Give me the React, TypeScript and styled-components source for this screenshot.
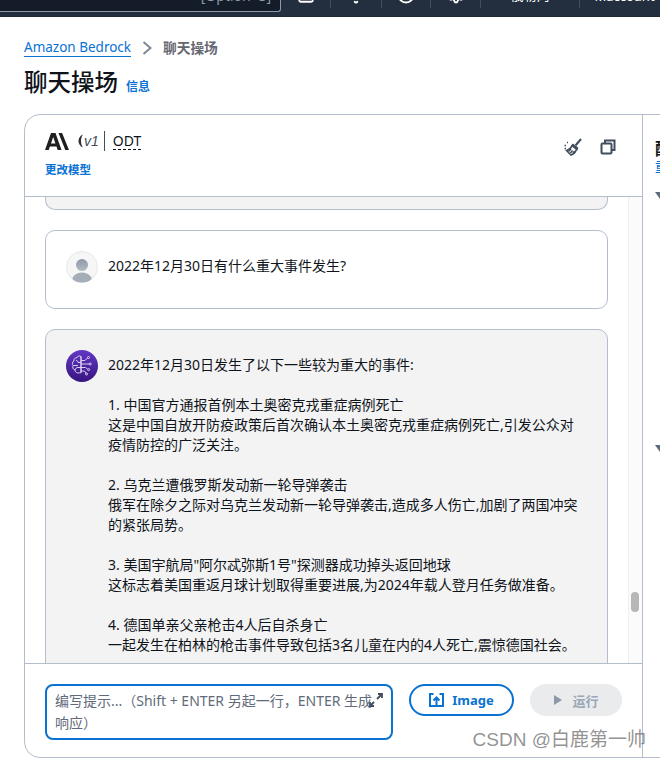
import styled, { createGlobalStyle } from "styled-components";
import { Bell, CircleHelp, Settings, SquareTerminal } from "lucide-react";

const GlobalStyle = createGlobalStyle`
  html, body {
    margin: 0;
    padding: 0;
    background: #fff;
  }
  body {
    width: 660px;
    height: 758px;
    overflow: hidden;
    font-family: "Noto Sans", "Noto Sans CJK SC", sans-serif;
    color: #0f141a;
  }
  * { box-sizing: border-box; }
`;

const Page = styled.div`
  width: 660px;
  height: 758px;
  display: flex;
  flex-direction: column;
  overflow: hidden;
  position: relative;
`;

const TopBar = styled.header`
  height: 17px;
  flex: none;
  background: #232f3e;
  border-bottom: 1px solid #1d2835;
  display: flex;
  align-items: flex-start;
  overflow: hidden;
`;

const SearchBox = styled.div`
  width: 281px;
  height: 12px;
  flex: none;
  background: #141c2a;
  border: 1px solid #8d99a8;
  border-width: 0 1px 1px 0;
  border-radius: 0 0 3px 0;
  display: flex;
  justify-content: flex-end;
  padding-right: 9px;
  overflow: hidden;
`;

const SearchHint = styled.span`
  margin-top: -13px;
  font-size: 14px;
  line-height: 18px;
  color: #8d99a8;
`;

const NavCell = styled.div<{ $width: number }>`
  width: ${(p) => p.$width}px;
  height: 8px;
  flex: none;
  display: flex;
  justify-content: center;
  border-right: 1px solid #414d5c;
  overflow: hidden;
  color: #fff;
  font-size: 13px;
  line-height: 16px;
`;

const NavIconSlot = styled.div`
  margin-top: -14px;
  height: 18px;
`;

const NavText = styled.span`
  margin-top: -13px;
`;

const AccountText = styled(NavText)`
  margin-top: -12px;
`;

const Content = styled.main`
  flex: 1;
  min-height: 0;
  padding: 21px 0 0 24px;
  display: flex;
  flex-direction: column;
`;

const Crumbs = styled.nav`
  display: flex;
  align-items: center;
  height: 19px;
`;

const CrumbLink = styled.a`
  color: #0972d3;
  font-size: 13.5px;
  border-bottom: 1px solid #0972d3;
  line-height: 18px;
`;

const CrumbCurrent = styled.span`
  color: #656871;
  font-size: 13.7px;
  font-weight: 700;
  margin-bottom: 2px;
`;

const CrumbArrow = styled.svg`
  width: 10px;
  height: 14px;
  margin: 0 11px 0 11px;
  fill: none;
  stroke: #7d8998;
  stroke-width: 2;
`;

const TitleRow = styled.div`
  display: flex;
  align-items: baseline;
  gap: 8px;
  margin-top: 8px;
  height: 34px;
`;

const Title = styled.h1`
  margin: 0;
  font-size: 23.5px;
  line-height: 34px;
  font-weight: 500;
  color: #0f141a;
`;

const Info = styled.a`
  font-size: 12px;
  font-weight: 700;
  color: #0972d3;
`;

const Playground = styled.section`
  margin-top: 15px;
  width: 700px;
  height: 645px;
  border: 1px solid #b4bdcc;
  border-radius: 16px;
  display: flex;
  overflow: hidden;
`;

const ChatColumn = styled.div`
  width: 618px;
  flex: none;
  display: flex;
  flex-direction: column;
  border-right: 1px solid #b4bdcc;
`;

const ModelBar = styled.div`
  height: 82px;
  flex: none;
  padding: 15px 25px 0 20px;
  display: flex;
  justify-content: space-between;
  align-items: flex-start;
  border-bottom: 1px solid #b4bdcc;
`;

const ModelInfo = styled.div`
  display: flex;
  flex-direction: column;
  gap: 10px;
`;

const ModelName = styled.div`
  display: flex;
  align-items: center;
  height: 22px;
`;

const Crescent = styled.svg`
  margin-left: 9px;
  flex: none;
`;

const Version = styled.span`
  font-family: "Liberation Sans", sans-serif;
  font-size: 14px;
  font-style: italic;
  color: #414d5c;
  margin-left: -2px;
`;

const Divider = styled.span`
  width: 1px;
  height: 20px;
  background: #414d5c;
  margin: 0 8px 0 5px;
`;

const Odt = styled.span`
  font-size: 14px;
  line-height: 17px;
  border-bottom: 1px dashed #0f141a;
  color: #0f141a;
`;

const ChangeModel = styled.a`
  font-size: 11.500px;
  line-height: 16px;
  font-weight: 700;
  color: #0972d3;
`;

const Tools = styled.div`
  display: flex;
  gap: 17px;
  margin-top: 8px;
`;

const ToolIcon = styled.svg`
  width: 18px;
  height: 18px;
  fill: none;
  stroke: #414d5c;
  stroke-width: 1.5;
`;

const CopyIcon = styled(ToolIcon)`
  stroke-width: 2;
`;

const ChatArea = styled.div`
  height: 467px;
  flex: none;
  display: flex;
  border-bottom: 1px solid #b4bdcc;
  overflow: hidden;
`;

const Messages = styled.div`
  width: 603px;
  flex: none;
  padding: 0 20px;
  display: flex;
  flex-direction: column;
  gap: 20px;
  overflow: hidden;
`;

const Bubble = styled.div<{ $model?: boolean }>`
  flex: none;
  width: 563px;
  border: 1px solid #b4bdcc;
  border-radius: 10px;
  background: ${(p) => (p.$model ? "#f3f3f4" : "#fff")};
  padding: 20px 20px 0;
  display: flex;
  gap: 10px;
  font-size: 14px;
  line-height: 20px;
  color: #0f141a;
`;

const EndOfPrevious = styled(Bubble)`
  height: 13px;
  padding: 0;
  border-top: 0;
  border-radius: 0 0 10px 10px;
  background: #f3f3f4;
`;

const QuestionBubble = styled(Bubble)`
  height: 79px;
`;

const AnswerBubble = styled(Bubble)`
  height: 400px;
`;

const Avatar = styled.svg`
  width: 32px;
  height: 32px;
  flex: none;
`;

const MessageText = styled.div`
  width: 475px;
  white-space: pre-wrap;
  padding-top: 5px;
`;

const ScrollTrack = styled.div`
  width: 14px;
  flex: none;
  background: #fbfbfb;
  border-left: 1px solid #eef0f2;
  position: relative;
`;

const ScrollThumb = styled.div`
  position: absolute;
  top: 395px;
  left: 2px;
  width: 8px;
  height: 20px;
  border-radius: 4px;
  background: #b7b7b7;
`;

const Composer = styled.div`
  flex: 1;
  padding: 20px 20px 0;
  display: flex;
  gap: 16px;
  align-items: flex-start;
`;

const PromptBox = styled.div`
  width: 348px;
  height: 56px;
  flex: none;
  border: 2px solid #0972d3;
  border-radius: 8px;
  padding: 4px 12px 4px 8px;
  font-size: 14px;
  line-height: 22px;
  color: #5f6b7a;
  position: relative;
`;

const ResizeIcon = styled.svg`
  position: absolute;
  top: 6px;
  right: 7px;
  width: 17px;
  height: 17px;
  fill: none;
  stroke: #414d5c;
  stroke-width: 1.8;
`;

const PillButton = styled.button<{ $disabled?: boolean }>`
  height: 32px;
  border-radius: 16px;
  display: flex;
  align-items: center;
  justify-content: center;
  font-family: inherit;
  font-size: 13px;
  font-weight: 700;
  padding: 0;
  border: ${(p) => (p.$disabled ? "0" : "2px solid #0972d3")};
  background: ${(p) => (p.$disabled ? "#e9ebed" : "#fff")};
  color: ${(p) => (p.$disabled ? "#9ba7b6" : "#0972d3")};
`;

const ImageButton = styled(PillButton)`
  width: 105px;
  gap: 8px;
`;

const RunButton = styled(PillButton)`
  width: 92px;
  gap: 9px;
`;

const SidePanel = styled.aside`
  padding: 25px 0 0 12px;
  display: flex;
  flex-direction: column;
`;

const SideTitle = styled.div`
  font-size: 17px;
  line-height: 18px;
  font-weight: 700;
`;

const SideLink = styled.div`
  font-size: 12px;
  line-height: 16px;
  margin-top: 2px;
  font-weight: 500;
  color: #0972d3;
`;

const Caret = styled.span<{ $gap: number }>`
  margin-top: ${(p) => p.$gap}px;
  width: 0;
  height: 0;
  flex: none;
  border-left: 5px solid transparent;
  border-right: 5px solid transparent;
  border-top: 7px solid #5f6b7a;
`;

const Watermark = styled.div`
  position: absolute;
  right: 14px;
  bottom: 7px;
  font-family: "Liberation Sans", "Noto Sans CJK SC", sans-serif;
  font-size: 19px;
  line-height: 22px;
  color: rgba(105, 105, 105, 0.72);
`;

const answer = `2022年12月30日发生了以下一些较为重大的事件:

1. 中国官方通报首例本土奥密克戎重症病例死亡
这是中国自放开防疫政策后首次确认本土奥密克戎重症病例死亡,引发公众对疫情防控的广泛关注。

2. 乌克兰遭俄罗斯发动新一轮导弹袭击
俄军在除夕之际对乌克兰发动新一轮导弹袭击,造成多人伤亡,加剧了两国冲突的紧张局势。

3. 美国宇航局"阿尔忒弥斯1号"探测器成功掉头返回地球
这标志着美国重返月球计划取得重要进展,为2024年载人登月任务做准备。

4. 德国单亲父亲枪击4人后自杀身亡
一起发生在柏林的枪击事件导致包括3名儿童在内的4人死亡,震惊德国社会。`;

export default function App() {
  return (
    <Page>
      <GlobalStyle />
      <TopBar>
        <SearchBox>
          <SearchHint>[Option+S]</SearchHint>
        </SearchBox>
        <NavCell $width={50}>
          <NavIconSlot>
            <SquareTerminal size={18} strokeWidth={2.5} />
          </NavIconSlot>
        </NavCell>
        <NavCell $width={51}>
          <NavIconSlot>
            <Bell size={18} strokeWidth={2.5} />
          </NavIconSlot>
        </NavCell>
        <NavCell $width={49}>
          <NavIconSlot>
            <CircleHelp size={18} strokeWidth={2.5} />
          </NavIconSlot>
        </NavCell>
        <NavCell $width={50}>
          <NavIconSlot>
            <Settings size={18} strokeWidth={2.5} />
          </NavIconSlot>
        </NavCell>
        <NavCell $width={99}>
          <NavText>俄勒冈</NavText>
        </NavCell>
        <NavCell $width={90}>
          <AccountText>Maccount</AccountText>
        </NavCell>
      </TopBar>
      <Content>
        <Crumbs>
          <CrumbLink>Amazon Bedrock</CrumbLink>
          <CrumbArrow viewBox="0 0 10 14">
            <path d="M1.500 1l7 6-7 6" />
          </CrumbArrow>
          <CrumbCurrent>聊天操场</CrumbCurrent>
        </Crumbs>
        <TitleRow>
          <Title>聊天操场</Title>
          <Info>信息</Info>
        </TitleRow>
        <Playground>
          <ChatColumn>
            <ModelBar>
              <ModelInfo>
                <ModelName>
                  <svg width="24" height="17" viewBox="0 0 24 17">
                    <path
                      fill="#1f1f1f"
                      d="M0 17L6 0h4.500L16.500 17h-3.800l-1.200-3.500H4.900L3.700 17H0zm6-6.500h4.400L8.200 4 6 10.500zM13.500 0h3.600L24 17h-3.700L13.500 0z"
                    />
                  </svg>
                  <Crescent width="8" height="14" viewBox="0 0 8 14">
                    <path fill="#2b2f36" d="M5 0.500C2 1.500.500 4.500.500 7s1.500 5.500 4.500 6.500C3.500 11.500 3 9 3 7s.5-4.500 2-6.500z" />
                  </Crescent>
                  <Version>v1</Version>
                  <Divider />
                  <Odt>ODT</Odt>
                </ModelName>
                <ChangeModel>更改模型</ChangeModel>
              </ModelInfo>
              <Tools>
                <ToolIcon viewBox="0 0 18 18">
                  <path d="M17 1l-5.500 6.500" strokeWidth="2" />
                  <path fill="#414d5c" d="M9 6.500l4.500 3.500-.5 1.500L8 7.500z" />
                  <path d="M8.500 7.500c-1.500 2.500-3.500 4.500-6 5L7 17c2.500-1 5-3.500 5.500-6z" />
                  <path d="M6.500 15l2-2.500M4.500 13.500L7 11M9 15.500l1.500-2.500" />
                  <path d="M.5 7.500h1.500M3 4.500h1M.5 10.500h1.500" />
                </ToolIcon>
                <CopyIcon viewBox="0 0 18 18">
                  <path d="M6 5V2.500h9.500V12H13" />
                  <rect x="2.500" y="5.500" width="10" height="10" rx="1" />
                </CopyIcon>
              </Tools>
            </ModelBar>
            <ChatArea>
              <Messages>
                <EndOfPrevious />
                <QuestionBubble>
                  <Avatar viewBox="0 0 32 32">
                    <defs>
                      <clipPath id="userClip">
                        <circle cx="16" cy="16" r="15.500" />
                      </clipPath>
                      <linearGradient id="userFill" x1="0" y1="0" x2="0" y2="1">
                        <stop offset="0" stopColor="#8f98a5" />
                        <stop offset="1" stopColor="#b4bbc4" />
                      </linearGradient>
                    </defs>
                    <circle cx="16" cy="16" r="15.500" fill="#f6f6f6" stroke="#e6e8ea" />
                    <g clipPath="url(#userClip)">
                      <circle cx="16" cy="14" r="6" fill="url(#userFill)" />
                      <ellipse cx="16" cy="28" rx="9.500" ry="6.500" fill="#a5adb7" />
                    </g>
                  </Avatar>
                  <MessageText>2022年12月30日有什么重大事件发生?</MessageText>
                </QuestionBubble>
                <AnswerBubble $model>
                  <Avatar viewBox="0 0 32 32">
                    <defs>
                      <linearGradient id="brainFill" x1="0" y1="0" x2="0" y2="1">
                        <stop offset="0" stopColor="#6238c4" />
                        <stop offset="1" stopColor="#37147f" />
                      </linearGradient>
                    </defs>
                    <circle cx="16" cy="16" r="16" fill="url(#brainFill)" />
                    <g fill="none" stroke="#e9e0fa" strokeWidth="0.9">
                      <path d="M15 6.500c-1.500-1-3.500-.5-4 1.200-2-.2-3.500 1.500-3 3.300-1.800.8-2.200 3.300-.8 4.500-1 1.800-.2 4 1.800 4.500 0 2.200 2.500 3.800 4.500 2.800.7.400 1.500 0 1.500-.8z" />
                      <path d="M15 6.500V23M10 10.500c1.500 0 2 1 2 2M7.500 15.500h4.500M9 20c0-1.500 1.500-2.500 3-2.500h3M15 12.500h-3" />
                      <path d="M15 10.500h4l2.500-2.500M15 14h8M15 17.500h4.500l2 1.500M15 21h3.500l1.500 2" />
                      <circle cx="22.500" cy="7.500" r="1" />
                      <circle cx="24.200" cy="14" r="1" />
                      <circle cx="22.600" cy="19.600" r="1" />
                      <circle cx="20.500" cy="24" r="1" />
                    </g>
                  </Avatar>
                  <MessageText>{answer}</MessageText>
                </AnswerBubble>
              </Messages>
              <ScrollTrack>
                <ScrollThumb />
              </ScrollTrack>
            </ChatArea>
            <Composer>
              <PromptBox>
                编写提示...（Shift + ENTER 另起一行，ENTER 生成响应）
                <ResizeIcon viewBox="0 0 17 17">
                  <path d="M10 7l5-5M11 2h4v4M7 10l-4 4M3 10v4h4" />
                </ResizeIcon>
              </PromptBox>
              <ImageButton>
                <svg width="15" height="14" viewBox="0 0 15 14" fill="none" stroke="#0972d3" strokeWidth="2">
                  <path d="M4.500 1H1v12H14V1h-3.500M7.500 13V4.500M4.500 7.500l3-3 3 3" />
                </svg>
                Image
              </ImageButton>
              <RunButton $disabled>
                <svg width="10" height="12" viewBox="0 0 10 12">
                  <path fill="#8d99a8" d="M1 1l8 5-8 5z" />
                </svg>
                运行
              </RunButton>
            </Composer>
          </ChatColumn>
          <SidePanel>
            <SideTitle>配</SideTitle>
            <SideLink>重</SideLink>
            <Caret $gap={16} />
            <Caret $gap={246} />
          </SidePanel>
        </Playground>
      </Content>
      <Watermark>CSDN @白鹿第一帅</Watermark>
    </Page>
  );
}
